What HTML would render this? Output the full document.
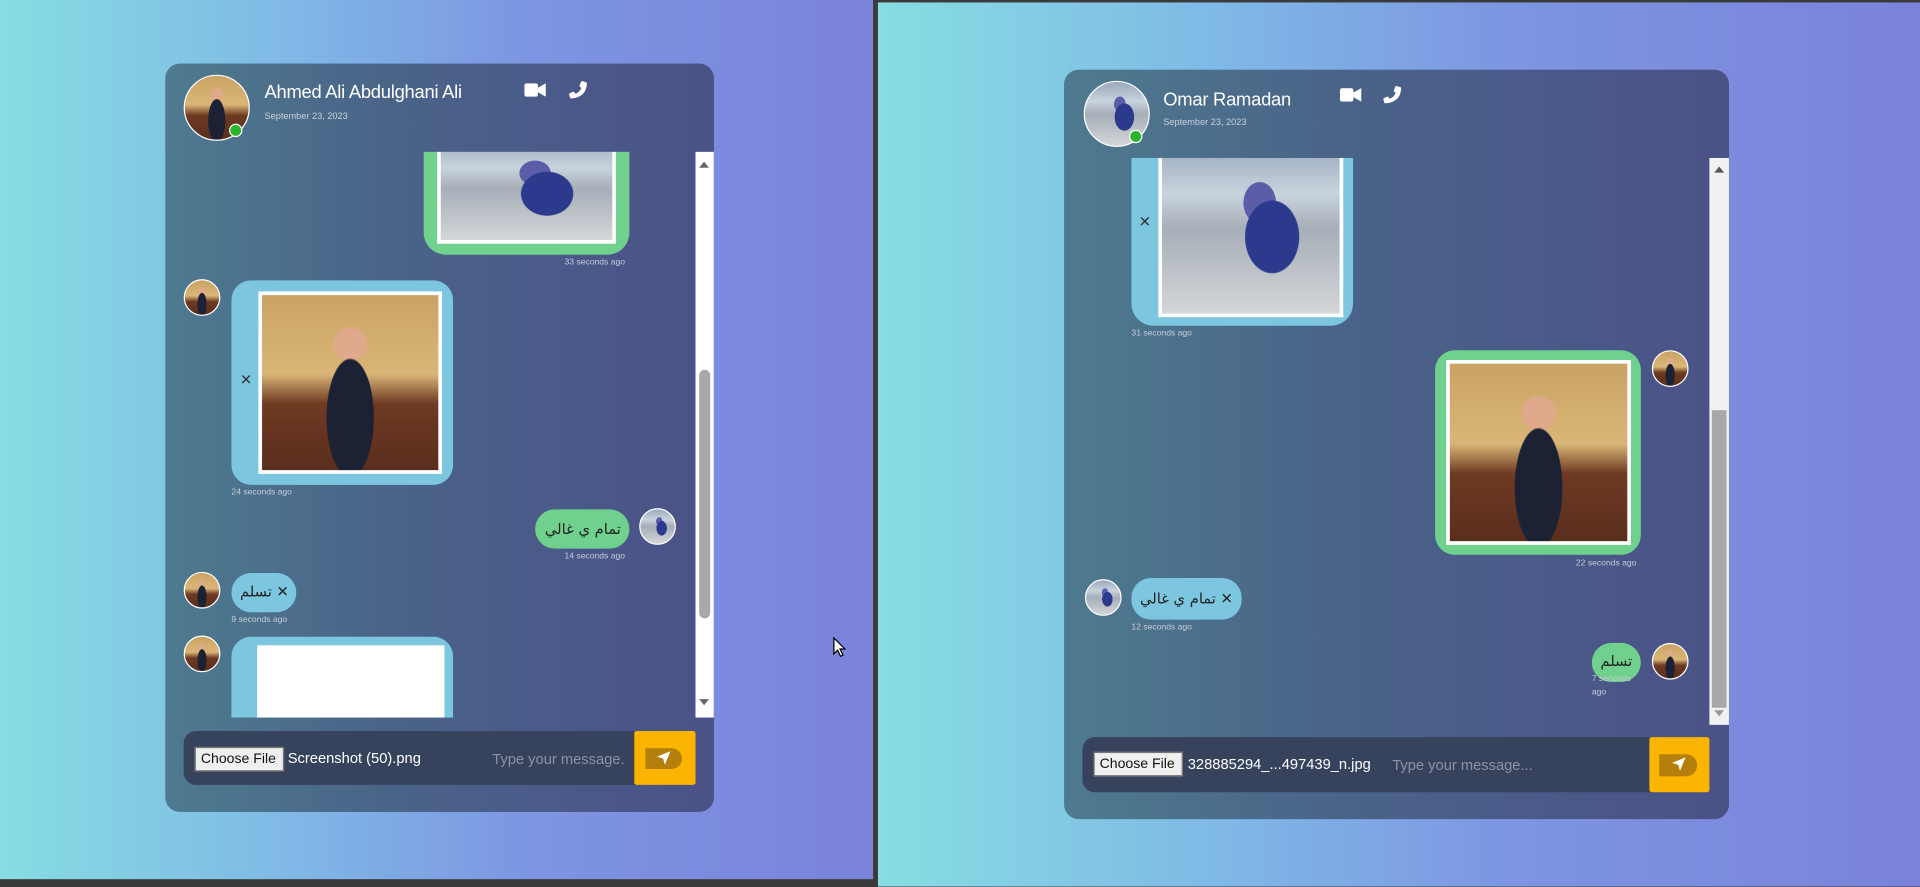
<!DOCTYPE html>
<html><head><meta charset="utf-8"><style>
*{box-sizing:border-box;margin:0;padding:0}
html,body{width:1920px;height:886px;overflow:hidden;background:#3a3a3a;font-family:"Liberation Sans","Noto Sans CJK SC",sans-serif}
#w{position:absolute;left:0;top:0;width:1568px;height:724px;transform:scale(1.22449);transform-origin:0 0;background:#3a3a3a}
.a{position:absolute}
.pane{position:absolute;background:linear-gradient(90deg,#86dde2 0%,#7fb6e6 35%,#7d96e2 60%,#7a82d9 100%)}
.card{position:absolute;border-radius:12px;overflow:hidden;background:linear-gradient(90deg,#4e7a8f 0%,#4a6488 40%,#4a5a89 70%,#4b5286 100%)}
.hdr{position:absolute;left:0;top:0;right:0;background:rgba(60,70,110,0.12)}
.av{position:absolute;border-radius:50%;border:1.5px solid #fff;overflow:hidden}
.suit{background:radial-gradient(ellipse 22% 55% at 50% 70%,#1c2134 60%,transparent 62%),radial-gradient(circle at 50% 28%,#e0a98c 10%,transparent 12%),linear-gradient(180deg,#c9a364 0%,#d9b677 45%,#6e3a22 62%,#5a2e1d 100%)}
.office{background:radial-gradient(ellipse 25% 35% at 62% 55%,#2b3a8c 60%,transparent 62%),radial-gradient(ellipse 15% 20% at 55% 35%,#5b5da8 60%,transparent 62%),linear-gradient(180deg,#9aa8be 0%,#c8d3dc 30%,#a6aeb8 50%,#d4d6d8 100%)}
.dot{position:absolute;width:11px;height:11px;border-radius:50%;background:#2cb52c;border:1px solid #fff}
.name{position:absolute;color:#fff;font-size:15px;letter-spacing:-0.2px}
.date{position:absolute;color:#c8d0dc;font-size:7.5px}
.sb{position:absolute;background:#fff}
.thumb{position:absolute;background:#a8a8a8;border-radius:5px}
.ts{position:absolute;color:#c6ccd8;font-size:7px;white-space:nowrap}
.gb{position:absolute;background:#70d08e;border-radius:16px}
.bb{position:absolute;background:#7cc6df;border-radius:16px}
.img{position:absolute;border:3px solid #fff}
.txt{position:absolute;font-size:12px;color:#222;font-family:"DejaVu Sans",sans-serif;white-space:nowrap}
.bar{position:absolute;background:#37425d;border-radius:10px}
.cf{position:absolute;background:#efefef;border:1px solid #767676;font-size:11.5px;color:#111;padding:1px 4px;line-height:16px;width:73px;white-space:nowrap}
.fn{position:absolute;color:#fff;font-size:12px;white-space:nowrap}
.ph{position:absolute;color:#8a93a5;font-size:12px;white-space:nowrap}
.send{position:absolute;background:#fbb500;border-radius:2px}
.pill{position:absolute;background:#b57f0c;border-radius:0 9px 9px 0}
.x{position:absolute;font-size:12px;color:#333}
</style></head><body><div id="w">
<div class="pane" style="left:0;top:0;width:713px;height:718px"></div>
<div class="card" style="left:135px;top:52px;width:448px;height:611px">
 <div class="gb" style="left:211px;top:60px;width:168px;height:96px;border-radius:0 0 18px 18px"></div>
 <div class="img office" style="left:222px;top:60px;width:146px;height:87px;border-top:0"></div>
 <div class="hdr" style="height:72px;background:linear-gradient(90deg,#4e7a8f 0%,#4a6488 40%,#4a5a89 70%,#4b5286 100%)"></div>
 <div class="av suit" style="left:15px;top:9px;width:54px;height:54px"></div>
 <div class="dot" style="left:52px;top:49px"></div>
 <div class="name" style="left:81px;top:15px">Ahmed Ali Abdulghani Ali</div>
 <div class="date" style="left:81px;top:38px">September 23, 2023</div>
 <svg class="a" style="left:293px;top:16px" width="18" height="11" viewBox="0 0 19 12"><rect x="0" y="0" width="12" height="12" rx="2" fill="#fff"/><path d="M12 4 L19 0 V12 L12 8Z" fill="#fff"/></svg>
 <svg class="a" style="left:329px;top:14px" width="16" height="15" viewBox="0 0 16 16"><path d="M15.5 1.5 L12 0.3 Q11 0 10.6 1 L9.4 4 Q9.1 4.8 9.8 5.3 L11 6.2 Q9.4 10 5.8 11.3 L4.8 10 Q4.3 9.3 3.5 9.6 L0.8 10.8 Q0 11.2 0.3 12.1 L1.3 15.3 Q15 15 15.8 2.3 Q15.8 1.7 15.5 1.5Z" fill="#fff"/></svg>
 <div class="ts" style="left:326px;top:159px">33 seconds ago</div>
 <div class="av suit" style="left:15px;top:176px;width:30px;height:30px"></div>
 <div class="bb" style="left:54px;top:177px;width:181px;height:167px"></div>
 <div class="img suit" style="left:76px;top:186px;width:150px;height:149px"></div>
 <div class="x" style="left:61px;top:251px">✕</div>
 <div class="ts" style="left:54px;top:347px">24 seconds ago</div>
 <div class="gb" style="left:302px;top:364px;width:77px;height:32px"></div>
 <div class="txt" style="left:310px;top:373px">تمام ي غالي</div>
 <div class="av office" style="left:387px;top:363px;width:30px;height:30px"></div>
 <div class="ts" style="left:326px;top:399px">14 seconds ago</div>
 <div class="av suit" style="left:15px;top:415px;width:30px;height:30px"></div>
 <div class="bb" style="left:54px;top:416px;width:53px;height:32px"></div>
 <div class="txt" style="left:61px;top:424px">تسلم ✕</div>
 <div class="ts" style="left:54px;top:451px">9 seconds ago</div>
 <div class="av suit" style="left:15px;top:467px;width:30px;height:30px"></div>
 <div class="bb" style="left:54px;top:468px;width:181px;height:80px;border-radius:16px 16px 0 0"></div>
 <div class="a" style="left:75px;top:475px;width:153px;height:73px;background:#fff"></div>
 <div class="a" style="left:0;top:534px;width:448px;height:77px;background:linear-gradient(90deg,#4e7a8f 0%,#4a6488 40%,#4a5a89 70%,#4b5286 100%)"></div>
 <div class="sb" style="left:433px;top:72px;width:15px;height:462px"></div>
 <div class="thumb" style="left:436px;top:250px;width:9px;height:203px"></div>
 <div class="a" style="left:436px;top:80px;width:0;height:0;border:4px solid transparent;border-bottom:5px solid #666;border-top:0"></div>
 <div class="a" style="left:436px;top:519px;width:0;height:0;border:4px solid transparent;border-top:5px solid #666;border-bottom:0"></div>
 <div class="bar" style="left:15px;top:545px;width:418px;height:44px"></div>
 <div class="cf" style="left:24px;top:558px">Choose File</div>
 <div class="fn" style="left:100px;top:560px">Screenshot (50).png</div>
 <div class="ph" style="left:267px;top:561px">Type your message.</div>
 <div class="send" style="left:383px;top:545px;width:50px;height:44px"></div>
 <div class="pill" style="left:392px;top:559px;width:30px;height:17px"></div>
 <svg class="a" style="left:401px;top:561px" width="12" height="12" viewBox="0 0 12 12"><path d="M11.5 0.5 L0.5 5 L5.5 6.5 L7 11.5Z" fill="#fff"/></svg>
</div>
<svg class="a" style="left:680px;top:520px" width="12" height="18" viewBox="0 0 12 18"><path d="M1 1 V14 L4 11 L6.5 16 L8.5 15 L6 10 L10 10Z" fill="#fff" stroke="#000" stroke-width="1"/></svg>

<div class="pane" style="left:717px;top:2px;width:851px;height:722px"></div>
<div class="card" style="left:869px;top:57px;width:543px;height:612px">
 <div class="bb" style="left:55px;top:60px;width:181px;height:149px;border-radius:0 0 18px 18px"></div>
 <div class="img office" style="left:77px;top:60px;width:151px;height:142px;border-top:0"></div>
 <div class="x" style="left:61px;top:117px">✕</div>
 <div class="hdr" style="height:72px;background:linear-gradient(90deg,#4e7a8f 0%,#4a6488 40%,#4a5a89 70%,#4b5286 100%)"></div>
 <div class="av office" style="left:16px;top:9px;width:54px;height:54px"></div>
 <div class="dot" style="left:53px;top:49px"></div>
 <div class="name" style="left:81px;top:16px">Omar Ramadan</div>
 <div class="date" style="left:81px;top:38px">September 23, 2023</div>
 <svg class="a" style="left:225px;top:15px" width="18" height="11" viewBox="0 0 19 12"><rect x="0" y="0" width="12" height="12" rx="2" fill="#fff"/><path d="M12 4 L19 0 V12 L12 8Z" fill="#fff"/></svg>
 <svg class="a" style="left:260px;top:13px" width="16" height="15" viewBox="0 0 16 16"><path d="M15.5 1.5 L12 0.3 Q11 0 10.6 1 L9.4 4 Q9.1 4.8 9.8 5.3 L11 6.2 Q9.4 10 5.8 11.3 L4.8 10 Q4.3 9.3 3.5 9.6 L0.8 10.8 Q0 11.2 0.3 12.1 L1.3 15.3 Q15 15 15.8 2.3 Q15.8 1.7 15.5 1.5Z" fill="#fff"/></svg>
 <div class="ts" style="left:55px;top:212px">31 seconds ago</div>
 <div class="gb" style="left:303px;top:229px;width:168px;height:167px"></div>
 <div class="img suit" style="left:312px;top:237px;width:151px;height:151px"></div>
 <div class="av suit" style="left:480px;top:229px;width:30px;height:30px"></div>
 <div class="ts" style="left:418px;top:400px">22 seconds ago</div>
 <div class="av office" style="left:17px;top:416px;width:30px;height:30px"></div>
 <div class="bb" style="left:55px;top:415px;width:90px;height:34px"></div>
 <div class="txt" style="left:62px;top:425px">تمام ي غالي ✕</div>
 <div class="ts" style="left:55px;top:452px">12 seconds ago</div>
 <div class="gb" style="left:431px;top:468px;width:40px;height:32px"></div>
 <div class="txt" style="left:438px;top:476px">تسلم</div>
 <div class="ts" style="left:431px;top:492px;line-height:11px">7 seconds<br>ago</div>
 <div class="av suit" style="left:480px;top:468px;width:30px;height:30px"></div>
 <div class="sb" style="left:527px;top:72px;width:16px;height:463px;background:#f1f1f1"></div>
 <div class="thumb" style="left:529px;top:278px;width:12px;height:243px;border-radius:0"></div>
 <div class="a" style="left:531px;top:79px;width:0;height:0;border:4px solid transparent;border-bottom:5px solid #555;border-top:0"></div>
 <div class="a" style="left:531px;top:523px;width:0;height:0;border:4px solid transparent;border-top:5px solid #999;border-bottom:0"></div>
 <div class="bar" style="left:15px;top:545px;width:512px;height:45px"></div>
 <div class="cf" style="left:24px;top:557px">Choose File</div>
 <div class="fn" style="left:101px;top:560px">328885294_...497439_n.jpg</div>
 <div class="ph" style="left:268px;top:561px">Type your message...</div>
 <div class="send" style="left:478px;top:545px;width:49px;height:45px"></div>
 <div class="pill" style="left:486px;top:559px;width:31px;height:18px"></div>
 <svg class="a" style="left:496px;top:561px" width="12" height="12" viewBox="0 0 12 12"><path d="M11.5 0.5 L0.5 5 L5.5 6.5 L7 11.5Z" fill="#fff"/></svg>
</div>
</div></body></html>
